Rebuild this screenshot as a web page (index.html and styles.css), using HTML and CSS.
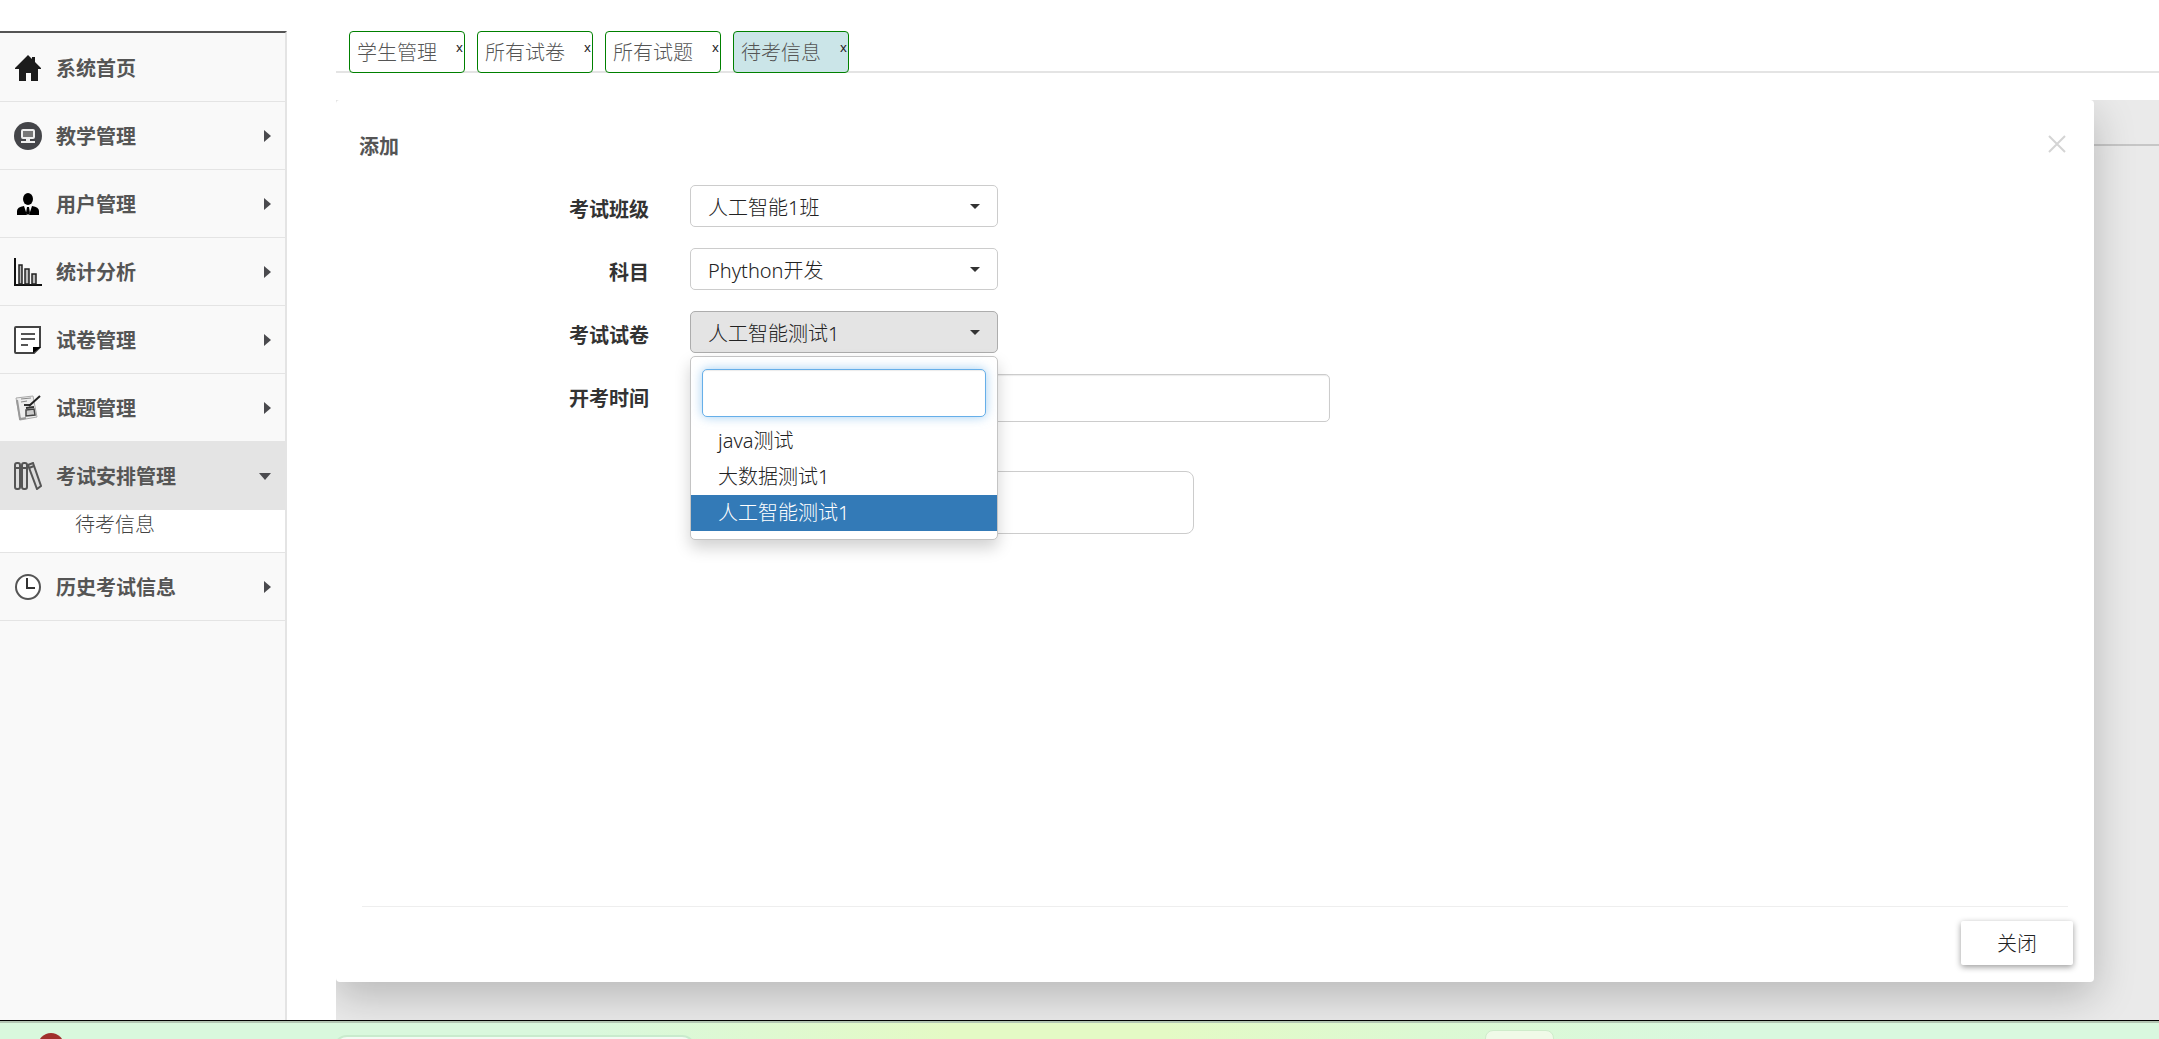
FILE: index.html
```html
<!DOCTYPE html>
<html lang="zh-CN">
<head>
<meta charset="utf-8">
<title>考试安排管理</title>
<link rel="stylesheet" href="styles.css">
</head>
<body>
<div class="app">
  <nav class="sidebar">
    <ul class="menu">
      <li><a class="menu-item" href="#">
        <svg class="icon" viewBox="0 0 28 28"><path fill="#1b1b1b" d="M14 1 18 5V3h3v5l6 6v1h-3v12h-7v-8h-5v8H5V15H1v-1z"/></svg>
        <span>系统首页</span></a></li>
      <li><a class="menu-item" href="#">
        <svg class="icon" viewBox="0 0 28 28"><circle cx="14" cy="14" r="14" fill="#444549"/><rect x="8" y="8" width="12" height="8" rx="1" fill="#777" stroke="#eee" stroke-width="2"/><path fill="#eee" d="M12 17h4v2h5v2H7v-2h5z"/></svg>
        <span>教学管理</span><i class="arrow"></i></a></li>
      <li><a class="menu-item" href="#">
        <svg class="icon" viewBox="0 0 28 28"><ellipse cx="14" cy="9" rx="5" ry="6"/><path d="M3 25v-4q0-4 7-5l3 9zM25 25v-4q0-4-7-5l-3 9zM13 17h2l1 6-2 2-2-2z"/></svg>
        <span>用户管理</span><i class="arrow"></i></a></li>
      <li><a class="menu-item" href="#">
        <svg class="icon" viewBox="0 0 28 28"><path fill="none" stroke="#111" stroke-width="2" d="M1 0v27h27"/><path fill="#bbb" stroke="#222" stroke-width="1.5" d="M5 26V7h3v19zM11 26V11h4v15zM18 26V16h4v10z"/></svg>
        <span>统计分析</span><i class="arrow"></i></a></li>
      <li><a class="menu-item" href="#">
        <svg class="icon" viewBox="0 0 28 28"><path fill="#fff" stroke="#444" stroke-width="2" d="M2 1h24v20l-6 6H2q-1 0-1-1V2q0-1 1-1z"/><path stroke="#555" stroke-width="2" d="M7 8h14M7 13h14M7 19h7"/><path d="M19 27v-6h8z"/></svg>
        <span>试卷管理</span><i class="arrow"></i></a></li>
      <li><a class="menu-item" href="#">
        <svg class="icon" viewBox="0 0 28 28"><path fill="#eee" stroke="#aaa" d="M2 4 19 2l4 21-17 3z"/><path fill="none" stroke="#999" stroke-width="2" d="M3 6l3 19 6-1"/><path stroke="#888" d="M7 5l10-1M7 8l6-1"/><path fill="#ccc" stroke="#444" stroke-width="1.5" d="m12 16 8-1 1 6-9 1z"/><path fill="none" stroke="#333" stroke-width="2" d="M10 11l6 0M12 14l8-1"/><path stroke="#222" stroke-width="2" d="M15 12 26 2"/></svg>
        <span>试题管理</span><i class="arrow"></i></a></li>
      <li><a class="menu-item menu-item-open" href="#">
        <svg class="icon" viewBox="0 0 28 28"><g fill="#ddd" stroke="#555" stroke-width="2"><rect x="1" y="1" width="5" height="26" rx="2"/><rect x="8" y="1" width="5" height="26" rx="2"/><path d="m14 3 5-2 8 23-4 3z"/><path d="M1 6h5M8 6h5M15 6l5-2"/></g></svg>
        <span>考试安排管理</span><i class="arrow arrow-down"></i></a>
        <a class="submenu-item" href="#">待考信息</a></li>
      <li><a class="menu-item" href="#">
        <svg class="icon" viewBox="0 0 28 28"><circle cx="14" cy="14" r="12" fill="#fff" stroke="#555" stroke-width="2"/><path fill="none" stroke="#333" stroke-width="2" d="M13 5v10h8"/></svg>
        <span>历史考试信息</span><i class="arrow"></i></a></li>
    </ul>
  </nav>
  <main class="main">
    <div class="tabs">
      <div class="tab"><a href="#">学生管理</a><button class="tab-close" aria-label="关闭标签">x</button></div>
      <div class="tab"><a href="#">所有试卷</a><button class="tab-close" aria-label="关闭标签">x</button></div>
      <div class="tab"><a href="#">所有试题</a><button class="tab-close" aria-label="关闭标签">x</button></div>
      <div class="tab tab-active"><a href="#">待考信息</a><button class="tab-close" aria-label="关闭标签">x</button></div>
    </div>
    <div class="backdrop">
      <section class="dialog" role="dialog" aria-labelledby="dialog-title">
        <header class="dialog-head">
          <h1 id="dialog-title">添加</h1>
          <button class="dialog-x" aria-label="关闭"><svg viewBox="0 0 18 18"><path d="m1 1 16 16M17 1 1 17"/></svg></button>
        </header>
        <form class="form">
          <div class="row">
            <label for="clazz">考试班级</label>
            <select class="picker" id="clazz"><option>人工智能1班</option></select>
          </div>
          <div class="row">
            <label for="subject">科目</label>
            <select class="picker" id="subject"><option>Phython开发</option></select>
          </div>
          <div class="row">
            <label for="paper">考试试卷</label>
            <div class="dropdown">
              <select class="picker picker-open" id="paper"><option>人工智能测试1</option></select>
              <div class="dropdown-menu">
                <input class="search" type="text" aria-label="搜索">
                <ul>
                  <li><a href="#">java测试</a></li>
                  <li><a href="#">大数据测试1</a></li>
                  <li><a class="selected" href="#">人工智能测试1</a></li>
                </ul>
              </div>
            </div>
          </div>
          <div class="row row-time">
            <label for="start">开考时间</label>
            <input class="time" id="start" type="text">
          </div>
          <div class="row">
            <span></span>
            <button class="submit" type="button" aria-label="提交"></button>
          </div>
        </form>
        <footer class="dialog-foot"><button class="close-btn">关闭</button></footer>
      </section>
    </div>
  </main>
</div>
<div class="taskbar">
  <span class="badge"></span>
  <span class="task-search"></span>
  <span class="task-app"></span>
</div>
</body>
</html>
```
FILE: styles.css
```css
* { box-sizing: border-box; }
body {
  margin: 0;
  height: 100vh;
  display: flex;
  flex-direction: column;
  overflow: hidden;
  background: #fff;
  color: #222;
  font: 300 20px/28px "Noto Sans", "Noto Sans CJK SC", sans-serif;
}
a { color: inherit; text-decoration: none; }
ul { margin: 0; padding: 0; list-style: none; }
button, input, select { font: inherit; color: inherit; margin: 0; }

.app { flex: 1; min-height: 0; display: flex; gap: 49px; padding-top: 31px; }
.sidebar {
  width: 287px;
  flex: none;
  padding-top: 1px;
  background: #f9f9f9;
  border-top: 2px solid #555;
  border-right: 2px solid #e4e4e4;
}
.menu li { border-bottom: 1px solid #e4e4e4; }
.menu-item {
  height: 67px;
  display: flex;
  align-items: center;
  gap: 14px;
  padding: 0 14px;
  color: #555;
  font-weight: 700;
}
.menu-item span { padding-top: 2px; }
.icon { width: 28px; height: 28px; flex: none; }
.arrow {
  margin-left: auto;
  border-left: 7px solid #4a4a4e;
  border-top: 6px solid transparent;
  border-bottom: 6px solid transparent;
}
.arrow-down {
  border-top: 7px solid #4a4a4e;
  border-left: 6px solid transparent;
  border-right: 6px solid transparent;
  border-bottom: 0;
}
.menu-item-open { height: 68px; background: #e4e4e4; }
.submenu-item { display: block; height: 42px; padding: 1px 0 0 75px; background: #fff; color: #444; }

.main { flex: 1; min-width: 0; display: flex; flex-direction: column; }
.tabs { height: 42px; display: flex; gap: 12px; padding-left: 13px; box-shadow: inset 0 -2px #e4e4e4; }
.tab {
  width: 116px;
  display: flex;
  justify-content: space-between;
  align-items: center;
  padding-left: 7px;
  border: 1px solid #008000;
  border-radius: 4px;
  background: #fff;
  color: #555;
}
.tab-active { background: #cbe5e8; }
.tab a { padding-top: 2px; }
.tab-close { align-self: flex-start; padding: 0 1px; border: 0; background: none; color: #222; font-size: 13px; font-weight: 400; line-height: 30px; }

.backdrop {
  flex: 1;
  display: flex;
  margin-top: 27px;
  padding: 0 65px 38px 0;
  overflow: hidden;
  background: linear-gradient(#eaeaea 44px, #c6c6c6 44px 46px, #eaeaea 46px);
}
.dialog {
  flex: 1;
  display: flex;
  flex-direction: column;
  background: #fff;
  border-radius: 4px;
  box-shadow: 0 14px 42px rgba(0, 0, 0, .22);
}
.dialog-head { display: flex; justify-content: space-between; align-items: center; height: 85px; padding: 2px 28px 0 23px; }
.dialog-head h1 { margin: 0; padding-top: 6px; color: #555; font-size: 20px; font-weight: 700; }
.dialog-x { padding: 0; border: 0; background: none; line-height: 0; }
.dialog-x svg { width: 18px; height: 18px; stroke: #d4d4d4; stroke-width: 2; }

.form { flex: 1; display: flex; flex-direction: column; gap: 21px; }
.row { display: grid; grid-template-columns: 313px 1fr; column-gap: 41px; justify-items: start; }
.row label { justify-self: end; padding-top: 11px; color: #333; font-weight: 700; }
.row-time { margin-bottom: 28px; }
.picker {
  appearance: none;
  display: block;
  width: 308px;
  height: 42px;
  padding: 4px 40px 0 17px;
  border: 1px solid #ccc;
  border-radius: 5px;
  background: #fff url("data:image/svg+xml,%3Csvg xmlns='http://www.w3.org/2000/svg' width='10' height='5'%3E%3Cpath fill='%23333' d='M0 0h10L5 5z'/%3E%3C/svg%3E") no-repeat right 17px center;
}
.picker-open { background-color: #e4e4e4; border-color: #adadad; }
.dropdown { position: relative; }
.dropdown-menu {
  position: absolute;
  z-index: 1;
  top: 45px;
  left: 0;
  width: 308px;
  padding: 12px 0 8px;
  background: #fff;
  border: 1px solid #c4c4c4;
  border-radius: 5px;
  box-shadow: 0 8px 16px rgba(0, 0, 0, .18);
}
.search {
  display: block;
  width: 284px;
  height: 48px;
  margin: 0 11px 6px;
  padding: 0 12px;
  border: 1px solid #66afe9;
  border-radius: 5px;
  box-shadow: inset 0 1px 1px rgba(0, 0, 0, .08), 0 0 11px rgba(102, 175, 233, .6);
  outline: 0;
}
.dropdown-menu a { display: block; height: 36px; padding-left: 27px; line-height: 36px; }
.dropdown-menu .selected { background: #337ab7; color: #fff; }
.time { width: 640px; height: 48px; padding: 0 16px; border: 1px solid #ccc; border-radius: 5px; box-shadow: inset 0 1px 1px rgba(0, 0, 0, .08); }
.submit { width: 504px; height: 63px; border: 1px solid #ccc; border-radius: 8px; background: #fff; }

.dialog-foot { display: flex; justify-content: flex-end; margin: 0 26px; padding: 14px 0 17px; border-top: 1px solid #eee; }
.close-btn { width: 112px; height: 44px; margin-right: -5px; padding: 2px 0 0; border: 0; border-radius: 2px; background: #fff; box-shadow: 0 2px 6px rgba(0, 0, 0, .4); }

.taskbar {
  position: relative;
  flex: none;
  height: 19px;
  overflow: hidden;
  border-top: 1px solid #000;
  background: linear-gradient(90deg, #d9f8dd 27%, #e4fac5 44% 54%, #dcf9d3 66%, #d9f8df 80%);
  box-shadow: inset 0 2px #b3c6b3;
}
.badge { position: absolute; left: 38px; top: 12px; width: 26px; height: 26px; border-radius: 50%; background: #a0302c; }
.task-search { position: absolute; left: 333px; top: 14px; width: 363px; height: 40px; border: 2px solid #c9ebcd; border-radius: 14px; background: #f3faf3; }
.task-app { position: absolute; left: 1485px; top: 9px; width: 69px; height: 60px; border: 1px solid #cfeccb; border-radius: 8px; background: #f0fae8; }
```
